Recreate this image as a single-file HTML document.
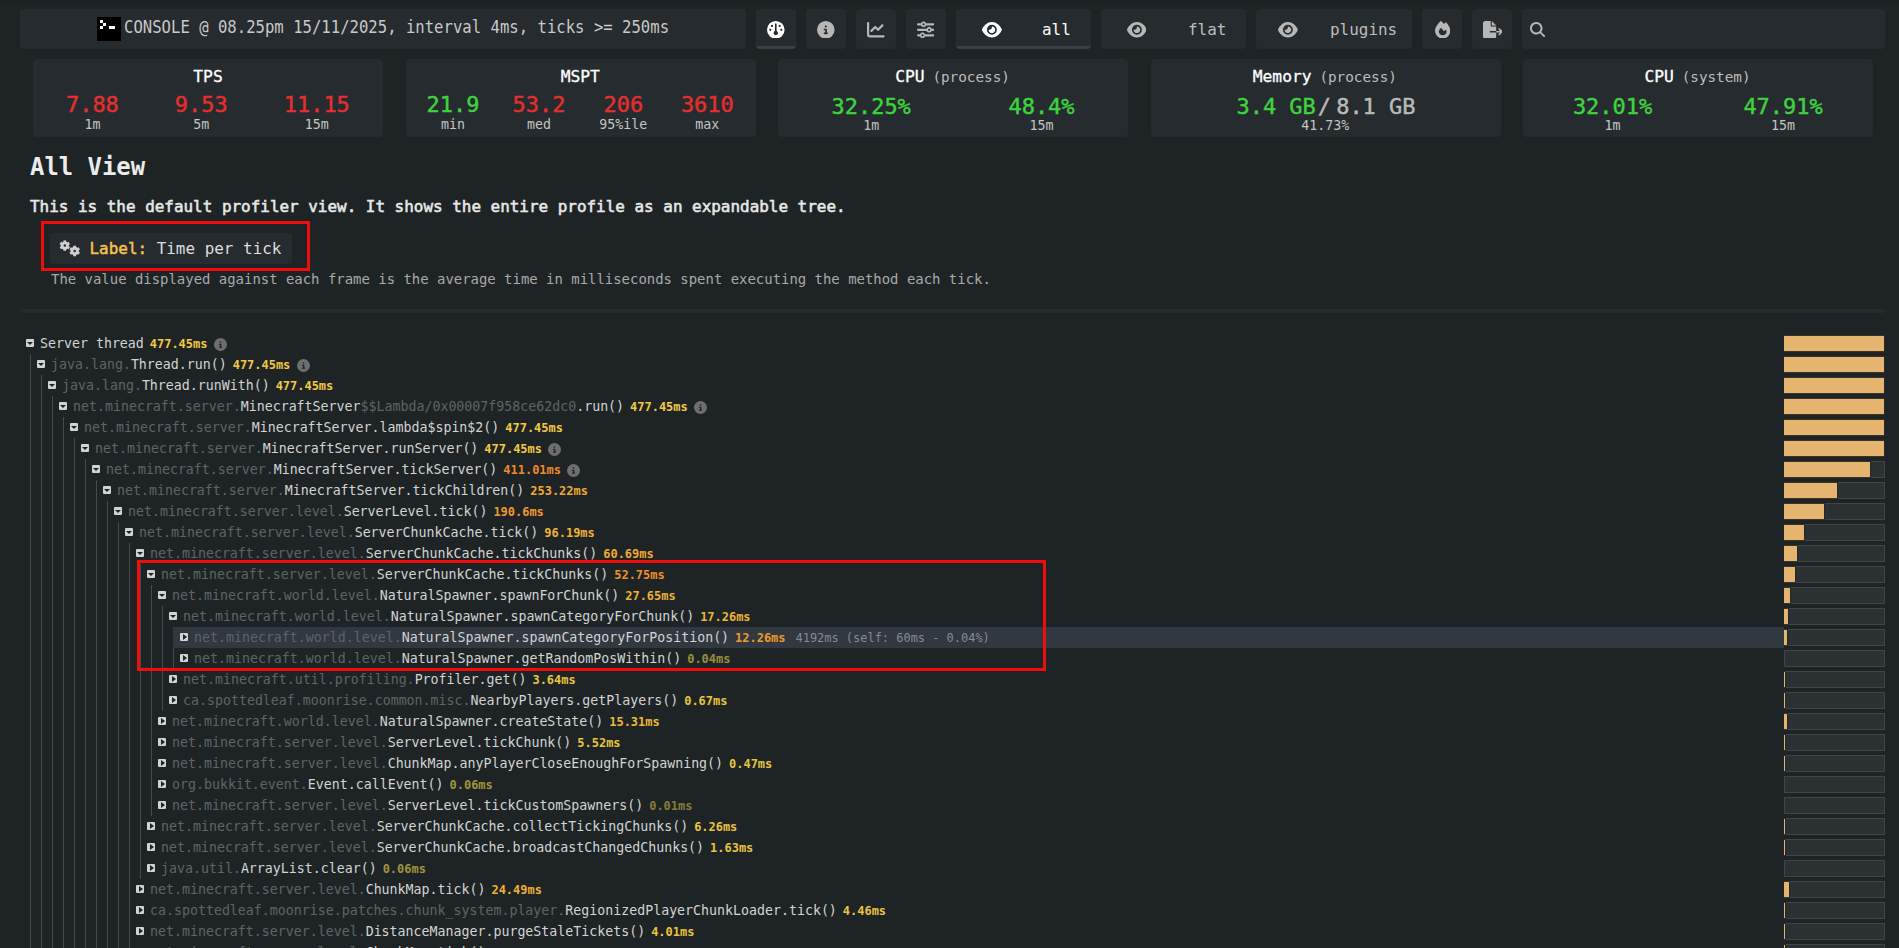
<!DOCTYPE html><html lang="en"><head><meta charset="utf-8"><title>spark | All View</title><style>
*{box-sizing:border-box;margin:0;padding:0}
html,body{width:1899px;height:948px;overflow:hidden;background:#1e2425;}
body{position:relative;font-family:"DejaVu Sans Mono","Liberation Mono",monospace;color:#d6d6d6;}
.abs{position:absolute;white-space:pre;}
.box{position:absolute;background:#252b2e;border-radius:4px;}
.c{transform:translateX(-50%);text-align:center}
.title{font-size:15.61px;line-height:24px;color:#c9c9c9;transform:scaleY(1.085);transform-origin:0 0}
.btn{position:absolute;top:9px;height:40px;background:#252b2e;border-radius:4px;}
.btn.on{border-bottom:3px solid #3a4043;}
.btn svg{position:absolute;}
.bt{position:absolute;font-size:15.95px;line-height:20px;top:11px;color:#bdbdbd}
.on .bt{color:#fff}
.pt{font-size:16.3px;line-height:20px;color:#fff;top:66.5px;-webkit-text-stroke:0.3px #fff}
.pt span{font-size:14.3px;color:#bdbdbd;-webkit-text-stroke:0;margin-left:-2px}
.v{font-size:21.93px;line-height:26px;-webkit-text-stroke:0.45px currentColor}
.l{font-size:13.29px;line-height:16px;color:#c4c4c4}
.r{color:#e62e2e} .g{color:#3fd23f} .gr{color:#b9b9b9}
h1{position:absolute;left:30px;top:152px;font-size:23.92px;line-height:30px;font-weight:bold;color:#ececec;white-space:pre}
.desc{left:30px;top:197px;font-size:15.95px;line-height:20px;color:#e8e8e8;-webkit-text-stroke:0.55px #e8e8e8}
.lbl{left:89.5px;top:238.8px;font-size:15.95px;line-height:20px;color:#dedede}
.lbl b{color:#f5c04e;font-weight:normal;-webkit-text-stroke:0.5px #f5c04e}
.sub{left:51px;top:271px;font-size:13.95px;line-height:16px;color:#a9a9a9}
.red{position:absolute;border:3.5px solid #f20d0d;}
.row{position:absolute;height:21px;left:0;width:1899px;}
.row.hl{}
.hlbg{position:absolute;background:#31383f;height:21px;}
.ic{position:absolute;top:6.4px;width:8.2px;height:8.1px;background:#d2d2d2;border-radius:1px}
.ic i{position:absolute;left:0;top:0;width:0;height:0;border-style:solid}
.ic.d i{left:1.1px;top:2.9px;border-width:3.2px 3px 0 3px;border-color:#1e2425 transparent transparent transparent}
.ic.e i{left:2.9px;top:1.1px;border-width:3px 0 3px 4.2px;border-color:transparent transparent transparent #1e2425}
.n{position:absolute;top:0.3px;font-size:13.288px;line-height:21px;white-space:pre;color:#d3d3d3}
.n .p{color:#5d6467}
.n .t{font-size:11.96px;font-weight:bold;margin-left:6px;}
.n .x{font-size:11.96px;color:#858b8e;margin-left:10px}
.n svg.inf{width:13px;height:13px;margin-left:6.5px;vertical-align:-2.5px}
.bar{position:absolute;left:1784px;width:101px;height:17px;top:2px;background:#2b3133;border:1px solid #3f4548}
.bar i{position:absolute;left:-1px;top:-1px;height:17px;background:#e5b56f;border-top:1px solid #3b3427;border-bottom:1px solid #3b3427;box-shadow:1px 0 0 #23282a}
.vl{position:absolute;width:1px;background:#444a4d}
</style></head><body>
<div class="abs" style="left:0;top:0;width:1899px;height:1px;background:#1b2021"></div>
<div class="box" style="left:20px;top:9px;width:726px;height:40px"></div>
<svg class="abs" style="left:97px;top:17px" width="24" height="24" viewBox="0 0 24 24"><rect width="24" height="24" fill="#000"/><rect x="3" y="3" width="3" height="3" fill="#fff"/><rect x="6" y="6" width="3" height="3" fill="#fff"/><rect x="3" y="9" width="3" height="3" fill="#fff"/><rect x="12" y="9" width="3" height="3" fill="#fff"/><rect x="15" y="9" width="3" height="3" fill="#fff"/></svg>
<div class="abs title" style="left:124px;top:15px">CONSOLE @ 08.25pm 15/11/2025, interval 4ms, ticks &gt;= 250ms</div>
<div class="btn on" style="left:756px;width:40px"><svg style="left:11px;top:11.7px" width="17.60" height="17.6" viewBox="0 0 512 512"><path fill="#fff" d="M0 256a256 256 0 1 1 512 0A256 256 0 1 1 0 256zm320 96c0-26.900-16.500-49.900-40-59.300V88c0-13.300-10.700-24-24-24s-24 10.700-24 24V292.700c-23.500 9.500-40 32.500-40 59.300c0 35.300 28.700 64 64 64s64-28.700 64-64zM144 176a32 32 0 1 0 0-64 32 32 0 1 0 0 64zm-16 80a32 32 0 1 0 -64 0 32 32 0 1 0 64 0zm288 32a32 32 0 1 0 0-64 32 32 0 1 0 0 64zM400 144a32 32 0 1 0 -64 0 32 32 0 1 0 64 0z"/></svg></div>
<div class="btn" style="left:806px;width:40px"><svg style="left:11px;top:11.7px" width="17.60" height="17.6" viewBox="0 0 512 512"><path fill="#b7b7b7" d="M256 512A256 256 0 1 0 256 0a256 256 0 1 0 0 512zM216 336h24V272H216c-13.300 0-24-10.700-24-24s10.700-24 24-24h48c13.300 0 24 10.700 24 24v88h8c13.300 0 24 10.700 24 24s-10.700 24-24 24H216c-13.300 0-24-10.700-24-24s10.700-24 24-24zm40-208a32 32 0 1 1 0 64 32 32 0 1 1 0-64z"/></svg></div>
<div class="btn" style="left:856px;width:40px"><svg style="left:11px;top:11.7px" width="17.60" height="17.6" viewBox="0 0 512 512"><path fill="#b7b7b7" d="M64 64c0-17.700-14.300-32-32-32S0 46.300 0 64V400c0 44.200 35.800 80 80 80H480c17.700 0 32-14.300 32-32s-14.300-32-32-32H80c-8.800 0-16-7.200-16-16V64zm406.600 86.600c12.500-12.500 12.500-32.800 0-45.300s-32.800-12.500-45.300 0L320 210.700l-57.400-57.400c-12.500-12.500-32.800-12.500-45.300 0l-112 112c-12.500 12.500-12.500 32.800 0 45.300s32.800 12.500 45.300 0L240 221.300l57.400 57.400c12.500 12.500 32.800 12.500 45.300 0l128-128z"/></svg></div>
<div class="btn" style="left:906px;width:40px"><svg style="left:10.8px;top:11.7px" width="17.60" height="17.6" viewBox="0 0 512 512"><path fill="#b7b7b7" d="M0 416c0 17.700 14.300 32 32 32l54.700 0c12.300 28.300 40.500 48 73.300 48s61-19.700 73.300-48L480 448c17.700 0 32-14.300 32-32s-14.300-32-32-32l-246.700 0c-12.300-28.300-40.500-48-73.300-48s-61 19.700-73.300 48L32 384c-17.700 0-32 14.300-32 32zm128 0a32 32 0 1 1 64 0 32 32 0 1 1 -64 0zM320 256a32 32 0 1 1 64 0 32 32 0 1 1 -64 0zm32-80c-32.800 0-61 19.700-73.300 48L32 224c-17.700 0-32 14.300-32 32s14.300 32 32 32l246.700 0c12.300 28.300 40.500 48 73.300 48s61-19.700 73.300-48l54.700 0c17.700 0 32-14.300 32-32s-14.300-32-32-32l-54.700 0c-12.300-28.300-40.500-48-73.300-48zM192 128a32 32 0 1 1 0-64 32 32 0 1 1 0 64zm73.300-64C253 35.700 224.800 16 192 16s-61 19.700-73.300 48L32 64C14.300 64 0 78.300 0 96s14.300 32 32 32l86.700 0c12.300 28.300 40.500 48 73.300 48s61-19.700 73.300-48L480 128c17.700 0 32-14.300 32-32s-14.300-32-32-32L265.300 64z"/></svg></div>
<div class="btn on" style="left:956px;width:135px"><svg style="left:25.8px;top:11.7px" width="19.80" height="17.6" viewBox="0 0 576 512"><path fill="#fff" d="M288 32c-80.800 0-145.500 36.800-192.600 80.600C48.600 156 17.300 208 2.500 243.700c-3.300 7.900-3.300 16.700 0 24.600C17.300 304 48.600 356 95.400 399.400C142.500 443.200 207.200 480 288 480s145.500-36.800 192.600-80.600c46.800-43.500 78.100-95.400 93-131.100c3.300-7.900 3.300-16.700 0-24.600c-14.900-35.700-46.200-87.700-93-131.100C433.500 68.800 368.800 32 288 32zM144 256a144 144 0 1 1 288 0 144 144 0 1 1 -288 0zm144-64c0 35.300-28.700 64-64 64c-7.100 0-13.900-1.200-20.300-3.300c-5.500-1.800-11.900 1.600-11.700 7.400c.3 6.900 1.300 13.800 3.200 20.700c13.700 51.200 66.400 81.600 117.600 67.900s81.600-66.400 67.900-117.600c-11.100-41.500-47.800-69.400-88.600-71.100c-5.800-.2-9.200 6.100-7.400 11.700c2.100 6.400 3.300 13.200 3.300 20.300z"/></svg><span class="bt" style="left:86px">all</span></div>
<div class="btn" style="left:1101px;width:145px"><svg style="left:25.7px;top:11.7px" width="19.80" height="17.6" viewBox="0 0 576 512"><path fill="#b7b7b7" d="M288 32c-80.800 0-145.500 36.800-192.600 80.600C48.600 156 17.300 208 2.500 243.700c-3.300 7.900-3.300 16.700 0 24.600C17.300 304 48.600 356 95.400 399.400C142.500 443.200 207.200 480 288 480s145.500-36.800 192.600-80.600c46.800-43.500 78.100-95.400 93-131.100c3.300-7.900 3.300-16.700 0-24.600c-14.900-35.700-46.200-87.700-93-131.100C433.500 68.800 368.800 32 288 32zM144 256a144 144 0 1 1 288 0 144 144 0 1 1 -288 0zm144-64c0 35.300-28.700 64-64 64c-7.100 0-13.900-1.200-20.300-3.300c-5.500-1.800-11.900 1.600-11.700 7.400c.3 6.900 1.300 13.800 3.200 20.700c13.700 51.200 66.400 81.600 117.600 67.900s81.600-66.400 67.900-117.600c-11.100-41.500-47.800-69.400-88.600-71.100c-5.800-.2-9.200 6.100-7.400 11.700c2.100 6.400 3.300 13.200 3.300 20.300z"/></svg><span class="bt" style="left:87px">flat</span></div>
<div class="btn" style="left:1256px;width:156px"><svg style="left:22px;top:11.7px" width="19.80" height="17.6" viewBox="0 0 576 512"><path fill="#b7b7b7" d="M288 32c-80.800 0-145.500 36.800-192.600 80.600C48.600 156 17.300 208 2.500 243.700c-3.300 7.900-3.300 16.700 0 24.600C17.300 304 48.600 356 95.400 399.400C142.500 443.200 207.200 480 288 480s145.500-36.800 192.600-80.600c46.800-43.500 78.100-95.400 93-131.100c3.300-7.900 3.300-16.700 0-24.600c-14.900-35.700-46.200-87.700-93-131.100C433.500 68.800 368.800 32 288 32zM144 256a144 144 0 1 1 288 0 144 144 0 1 1 -288 0zm144-64c0 35.300-28.700 64-64 64c-7.100 0-13.900-1.200-20.300-3.300c-5.500-1.800-11.900 1.600-11.700 7.400c.3 6.900 1.300 13.800 3.200 20.700c13.700 51.200 66.400 81.600 117.600 67.900s81.600-66.400 67.900-117.600c-11.100-41.500-47.800-69.400-88.600-71.100c-5.800-.2-9.200 6.100-7.400 11.700c2.100 6.400 3.300 13.200 3.300 20.300z"/></svg><span class="bt" style="left:74px">plugins</span></div>
<div class="btn" style="left:1422px;width:40px"><svg style="left:12.8px;top:11.7px" width="15.40" height="17.6" viewBox="0 0 448 512"><path fill="#b7b7b7" d="M159.300 5.400c7.800-7.300 19.900-7.200 27.700 .1c27.600 25.900 53.500 53.800 77.700 84c11-14.400 23.500-30.100 37-42.900c7.900-7.400 20.100-7.400 28 .1c34.600 33 63.900 76.600 84.500 118c20.300 40.800 33.800 82.500 33.800 111.900C448 404.200 348.200 512 224 512C98.400 512 0 404.100 0 276.500c0-38.400 17.800-85.300 45.400-131.700C73.300 97.700 112.700 48.600 159.300 5.400zM225.700 416c25.300 0 47.700-7 68.800-21c42.100-29.400 53.400-88.200 28.100-134.400c-4.500-9-16-9.600-22.500-2l-25.200 29.300c-6.600 7.600-18.500 7.400-24.700-.5c-16.500-21-46-58.500-62.800-79.800c-6.300-8-18.300-8.100-24.700-.1c-33.800 42.500-50.800 69.300-50.800 99.400C112 375.400 162.600 416 225.700 416z"/></svg></div>
<div class="btn" style="left:1472px;width:40px"><svg style="left:10.6px;top:11.7px" width="19.80" height="17.6" viewBox="0 0 576 512"><path fill="#b7b7b7" d="M0 64C0 28.700 28.700 0 64 0H224V128c0 17.700 14.300 32 32 32H384V288H216c-13.300 0-24 10.700-24 24s10.700 24 24 24H384V448c0 35.300-28.700 64-64 64H64c-35.300 0-64-28.700-64-64V64zM384 336V288H494.100l-39-39c-9.400-9.400-9.400-24.600 0-33.900s24.600-9.400 33.900 0l80 80c9.400 9.400 9.400 24.600 0 33.900l-80 80c-9.400 9.400-24.600 9.400-33.900 0s-9.400-24.600 0-33.900l39-39H384zm0-208H256V0L384 128z"/></svg></div>
<div class="btn" style="left:1522px;width:363px"><svg style="left:7.8px;top:12.8px" width="15.40" height="15.4" viewBox="0 0 512 512"><path fill="#b7b7b7" d="M416 208c0 45.900-14.900 88.300-40 122.700L502.600 457.400c12.500 12.500 12.500 32.800 0 45.300s-32.800 12.500-45.300 0L330.700 376c-34.400 25.200-76.800 40-122.700 40C93.100 416 0 322.900 0 208S93.100 0 208 0S416 93.100 416 208zM208 352a144 144 0 1 0 0-288 144 144 0 1 0 0 288z"/></svg></div>
<div class="box" style="left:33px;top:59px;width:350px;height:78px"></div>
<div class="box" style="left:405.5px;top:59px;width:350px;height:78px"></div>
<div class="box" style="left:778px;top:59px;width:350px;height:78px"></div>
<div class="box" style="left:1150.5px;top:59px;width:350px;height:78px"></div>
<div class="box" style="left:1523.3px;top:59px;width:350px;height:78px"></div>
<div class="abs c pt" style="left:208px">TPS</div>
<div class="abs c v r" style="left:92.4px;top:92.4px">7.88</div>
<div class="abs c l" style="left:92.4px;top:117px">1m</div>
<div class="abs c v r" style="left:201.2px;top:92.4px">9.53</div>
<div class="abs c l" style="left:201.2px;top:117px">5m</div>
<div class="abs c v r" style="left:316.8px;top:92.4px">11.15</div>
<div class="abs c l" style="left:316.8px;top:117px">15m</div>
<div class="abs c pt" style="left:580.3px">MSPT</div>
<div class="abs c v g" style="left:453px;top:92.4px">21.9</div>
<div class="abs c l" style="left:453px;top:117px">min</div>
<div class="abs c v r" style="left:539px;top:92.4px">53.2</div>
<div class="abs c l" style="left:539px;top:117px">med</div>
<div class="abs c v r" style="left:623.3px;top:92.4px">206</div>
<div class="abs c l" style="left:623.3px;top:117px">95%ile</div>
<div class="abs c v r" style="left:707.3px;top:92.4px">3610</div>
<div class="abs c l" style="left:707.3px;top:117px">max</div>
<div class="abs c pt" style="left:952.5px">CPU <span>(process)</span></div>
<div class="abs c v g" style="left:871.2px;top:93.7px">32.25%</div>
<div class="abs c l" style="left:871.2px;top:118.3px">1m</div>
<div class="abs c v g" style="left:1041.5px;top:93.7px">48.4%</div>
<div class="abs c l" style="left:1041.5px;top:118.3px">15m</div>
<div class="abs c pt" style="left:1324.8px">Memory <span>(process)</span></div>
<div class="abs v g" style="left:1236.5px;top:93.7px">3.4 GB</div>
<div class="abs v gr" style="left:1317.7px;top:93.7px">/</div>
<div class="abs v gr" style="left:1336.2px;top:93.7px">8.1 GB</div>
<div class="abs c l" style="left:1325.3px;top:118.3px">41.73%</div>
<div class="abs c pt" style="left:1697.5px">CPU <span>(system)</span></div>
<div class="abs c v g" style="left:1612.5px;top:93.7px">32.01%</div>
<div class="abs c l" style="left:1612.5px;top:118.3px">1m</div>
<div class="abs c v g" style="left:1783px;top:93.7px">47.91%</div>
<div class="abs c l" style="left:1783px;top:118.3px">15m</div>
<h1>All View</h1>
<div class="abs desc">This is the default profiler view. It shows the entire profile as an expandable tree.</div>
<div class="box" style="left:50px;top:233px;width:242px;height:31px"></div>
<svg class="abs" style="left:58px;top:238px" width="24" height="20" viewBox="0 0 24 20"><circle cx="6.8" cy="7.6" r="2.70" fill="none" stroke="#d0d0d0" stroke-width="2.91"/><path d="M9.50 9.16L11.30 10.20" stroke="#d0d0d0" stroke-width="2.70"/><path d="M6.80 10.72L6.80 12.80" stroke="#d0d0d0" stroke-width="2.70"/><path d="M4.10 9.16L2.30 10.20" stroke="#d0d0d0" stroke-width="2.70"/><path d="M4.10 6.04L2.30 5.00" stroke="#d0d0d0" stroke-width="2.70"/><path d="M6.80 4.48L6.80 2.40" stroke="#d0d0d0" stroke-width="2.70"/><path d="M9.50 6.04L11.30 5.00" stroke="#d0d0d0" stroke-width="2.70"/><circle cx="16.7" cy="13.0" r="2.76" fill="none" stroke="#d0d0d0" stroke-width="2.97"/><path d="M19.45 14.59L21.29 15.65" stroke="#d0d0d0" stroke-width="2.76"/><path d="M16.70 16.18L16.70 18.30" stroke="#d0d0d0" stroke-width="2.76"/><path d="M13.95 14.59L12.11 15.65" stroke="#d0d0d0" stroke-width="2.76"/><path d="M13.95 11.41L12.11 10.35" stroke="#d0d0d0" stroke-width="2.76"/><path d="M16.70 9.82L16.70 7.70" stroke="#d0d0d0" stroke-width="2.76"/><path d="M19.45 11.41L21.29 10.35" stroke="#d0d0d0" stroke-width="2.76"/></svg>
<div class="abs lbl"><b>Label:</b> Time per tick</div>
<div class="red" style="left:40.8px;top:220.6px;width:269.6px;height:50.8px"></div>
<div class="abs sub">The value displayed against each frame is the average time in milliseconds spent executing the method each tick.</div>
<div class="abs" style="left:20px;top:308.8px;width:1864.5px;height:4px;background:#252b2d;border-radius:2px"></div>
<div class="vl" style="left:30px;top:354px;height:609px"></div>
<div class="vl" style="left:41px;top:375px;height:588px"></div>
<div class="vl" style="left:52px;top:396px;height:567px"></div>
<div class="vl" style="left:63px;top:417px;height:546px"></div>
<div class="vl" style="left:74px;top:438px;height:525px"></div>
<div class="vl" style="left:85px;top:459px;height:504px"></div>
<div class="vl" style="left:96px;top:480px;height:483px"></div>
<div class="vl" style="left:107px;top:501px;height:462px"></div>
<div class="vl" style="left:118px;top:522px;height:441px"></div>
<div class="vl" style="left:129px;top:543px;height:420px"></div>
<div class="vl" style="left:140px;top:564px;height:315px"></div>
<div class="vl" style="left:151px;top:585px;height:231px"></div>
<div class="vl" style="left:162px;top:606px;height:105px"></div>
<div class="vl" style="left:173px;top:627px;height:42px"></div>
<div class="row" style="top:333px"><div class="ic d" style="left:26px"><i></i></div><div class="n" style="left:40px">Server thread<span class="t" style="color:#f3c943">477.45ms</span><svg class="inf" viewBox="0 0 512 512"><path fill="#6e6e6e" d="M256 512A256 256 0 1 0 256 0a256 256 0 1 0 0 512zM216 336h24V272H216c-13.300 0-24-10.700-24-24s10.700-24 24-24h48c13.300 0 24 10.700 24 24v88h8c13.300 0 24 10.700 24 24s-10.700 24-24 24H216c-13.300 0-24-10.700-24-24s10.700-24 24-24zm40-208a32 32 0 1 1 0 64 32 32 0 1 1 0-64z"/></svg></div><div class="bar"><i style="width:100px"></i></div></div>
<div class="row" style="top:354px"><div class="ic d" style="left:37px"><i></i></div><div class="n" style="left:51px"><span class="p">java.lang.</span>Thread.run()<span class="t" style="color:#f3c943">477.45ms</span><svg class="inf" viewBox="0 0 512 512"><path fill="#6e6e6e" d="M256 512A256 256 0 1 0 256 0a256 256 0 1 0 0 512zM216 336h24V272H216c-13.300 0-24-10.700-24-24s10.700-24 24-24h48c13.300 0 24 10.700 24 24v88h8c13.300 0 24 10.700 24 24s-10.700 24-24 24H216c-13.300 0-24-10.700-24-24s10.700-24 24-24zm40-208a32 32 0 1 1 0 64 32 32 0 1 1 0-64z"/></svg></div><div class="bar"><i style="width:100px"></i></div></div>
<div class="row" style="top:375px"><div class="ic d" style="left:48px"><i></i></div><div class="n" style="left:62px"><span class="p">java.lang.</span>Thread.runWith()<span class="t" style="color:#f3c943">477.45ms</span></div><div class="bar"><i style="width:100px"></i></div></div>
<div class="row" style="top:396px"><div class="ic d" style="left:59px"><i></i></div><div class="n" style="left:73px"><span class="p">net.minecraft.server.</span>MinecraftServer<span class="p">$$Lambda/0x00007f958ce62dc0</span>.run()<span class="t" style="color:#f3c943">477.45ms</span><svg class="inf" viewBox="0 0 512 512"><path fill="#6e6e6e" d="M256 512A256 256 0 1 0 256 0a256 256 0 1 0 0 512zM216 336h24V272H216c-13.300 0-24-10.700-24-24s10.700-24 24-24h48c13.300 0 24 10.700 24 24v88h8c13.300 0 24 10.700 24 24s-10.700 24-24 24H216c-13.300 0-24-10.700-24-24s10.700-24 24-24zm40-208a32 32 0 1 1 0 64 32 32 0 1 1 0-64z"/></svg></div><div class="bar"><i style="width:100px"></i></div></div>
<div class="row" style="top:417px"><div class="ic d" style="left:70px"><i></i></div><div class="n" style="left:84px"><span class="p">net.minecraft.server.</span>MinecraftServer.lambda$spin$2()<span class="t" style="color:#f3c943">477.45ms</span></div><div class="bar"><i style="width:100px"></i></div></div>
<div class="row" style="top:438px"><div class="ic d" style="left:81px"><i></i></div><div class="n" style="left:95px"><span class="p">net.minecraft.server.</span>MinecraftServer.runServer()<span class="t" style="color:#f3c943">477.45ms</span><svg class="inf" viewBox="0 0 512 512"><path fill="#6e6e6e" d="M256 512A256 256 0 1 0 256 0a256 256 0 1 0 0 512zM216 336h24V272H216c-13.300 0-24-10.700-24-24s10.700-24 24-24h48c13.300 0 24 10.700 24 24v88h8c13.300 0 24 10.700 24 24s-10.700 24-24 24H216c-13.300 0-24-10.700-24-24s10.700-24 24-24zm40-208a32 32 0 1 1 0 64 32 32 0 1 1 0-64z"/></svg></div><div class="bar"><i style="width:100px"></i></div></div>
<div class="row" style="top:459px"><div class="ic d" style="left:92px"><i></i></div><div class="n" style="left:106px"><span class="p">net.minecraft.server.</span>MinecraftServer.tickServer()<span class="t" style="color:#ef8a2b">411.01ms</span><svg class="inf" viewBox="0 0 512 512"><path fill="#6e6e6e" d="M256 512A256 256 0 1 0 256 0a256 256 0 1 0 0 512zM216 336h24V272H216c-13.300 0-24-10.700-24-24s10.700-24 24-24h48c13.300 0 24 10.700 24 24v88h8c13.300 0 24 10.700 24 24s-10.700 24-24 24H216c-13.300 0-24-10.700-24-24s10.700-24 24-24zm40-208a32 32 0 1 1 0 64 32 32 0 1 1 0-64z"/></svg></div><div class="bar"><i style="width:86px"></i></div></div>
<div class="row" style="top:480px"><div class="ic d" style="left:103px"><i></i></div><div class="n" style="left:117px"><span class="p">net.minecraft.server.</span>MinecraftServer.tickChildren()<span class="t" style="color:#f0a935">253.22ms</span></div><div class="bar"><i style="width:53px"></i></div></div>
<div class="row" style="top:501px"><div class="ic d" style="left:114px"><i></i></div><div class="n" style="left:128px"><span class="p">net.minecraft.server.level.</span>ServerLevel.tick()<span class="t" style="color:#f09a2e">190.6ms</span></div><div class="bar"><i style="width:40px"></i></div></div>
<div class="row" style="top:522px"><div class="ic d" style="left:125px"><i></i></div><div class="n" style="left:139px"><span class="p">net.minecraft.server.level.</span>ServerChunkCache.tick()<span class="t" style="color:#f0b435">96.19ms</span></div><div class="bar"><i style="width:20px"></i></div></div>
<div class="row" style="top:543px"><div class="ic d" style="left:136px"><i></i></div><div class="n" style="left:150px"><span class="p">net.minecraft.server.level.</span>ServerChunkCache.tickChunks()<span class="t" style="color:#f0ab33">60.69ms</span></div><div class="bar"><i style="width:13px"></i></div></div>
<div class="row" style="top:564px"><div class="ic d" style="left:147px"><i></i></div><div class="n" style="left:161px"><span class="p">net.minecraft.server.level.</span>ServerChunkCache.tickChunks()<span class="t" style="color:#ee8f2c">52.75ms</span></div><div class="bar"><i style="width:11px"></i></div></div>
<div class="row" style="top:585px"><div class="ic d" style="left:158px"><i></i></div><div class="n" style="left:172px"><span class="p">net.minecraft.world.level.</span>NaturalSpawner.spawnForChunk()<span class="t" style="color:#efb136">27.65ms</span></div><div class="bar"><i style="width:6px"></i></div></div>
<div class="row" style="top:606px"><div class="ic d" style="left:169px"><i></i></div><div class="n" style="left:183px"><span class="p">net.minecraft.world.level.</span>NaturalSpawner.spawnCategoryForChunk()<span class="t" style="color:#efb437">17.26ms</span></div><div class="bar"><i style="width:4px"></i></div></div>
<div class="row" style="top:627px"><div class="hlbg" style="left:173px;width:1611px"></div><div class="ic e" style="left:180px"><i></i></div><div class="n" style="left:194px"><span class="p">net.minecraft.world.level.</span>NaturalSpawner.spawnCategoryForPosition()<span class="t" style="color:#ee9a2e">12.26ms</span><span class="x">4192ms (self: 60ms - 0.04%)</span></div><div class="bar"><i style="width:3px"></i></div></div>
<div class="row" style="top:648px"><div class="ic e" style="left:180px"><i></i></div><div class="n" style="left:194px"><span class="p">net.minecraft.world.level.</span>NaturalSpawner.getRandomPosWithin()<span class="t" style="color:#9a8e3c">0.04ms</span></div><div class="bar"></div></div>
<div class="row" style="top:669px"><div class="ic e" style="left:169px"><i></i></div><div class="n" style="left:183px"><span class="p">net.minecraft.util.profiling.</span>Profiler.get()<span class="t" style="color:#e9c540">3.64ms</span></div><div class="bar"><i style="width:1px"></i></div></div>
<div class="row" style="top:690px"><div class="ic e" style="left:169px"><i></i></div><div class="n" style="left:183px"><span class="p">ca.spottedleaf.moonrise.common.misc.</span>NearbyPlayers.getPlayers()<span class="t" style="color:#e9c540">0.67ms</span></div><div class="bar"><i style="width:1px"></i></div></div>
<div class="row" style="top:711px"><div class="ic e" style="left:158px"><i></i></div><div class="n" style="left:172px"><span class="p">net.minecraft.world.level.</span>NaturalSpawner.createState()<span class="t" style="color:#eeb838">15.31ms</span></div><div class="bar"><i style="width:3px"></i></div></div>
<div class="row" style="top:732px"><div class="ic e" style="left:158px"><i></i></div><div class="n" style="left:172px"><span class="p">net.minecraft.server.level.</span>ServerLevel.tickChunk()<span class="t" style="color:#ecc33e">5.52ms</span></div><div class="bar"><i style="width:1px"></i></div></div>
<div class="row" style="top:753px"><div class="ic e" style="left:158px"><i></i></div><div class="n" style="left:172px"><span class="p">net.minecraft.server.level.</span>ChunkMap.anyPlayerCloseEnoughForSpawning()<span class="t" style="color:#e4c441">0.47ms</span></div><div class="bar"><i style="width:1px"></i></div></div>
<div class="row" style="top:774px"><div class="ic e" style="left:158px"><i></i></div><div class="n" style="left:172px"><span class="p">org.bukkit.event.</span>Event.callEvent()<span class="t" style="color:#a2953d">0.06ms</span></div><div class="bar"></div></div>
<div class="row" style="top:795px"><div class="ic e" style="left:158px"><i></i></div><div class="n" style="left:172px"><span class="p">net.minecraft.server.level.</span>ServerLevel.tickCustomSpawners()<span class="t" style="color:#877d38">0.01ms</span></div><div class="bar"></div></div>
<div class="row" style="top:816px"><div class="ic e" style="left:147px"><i></i></div><div class="n" style="left:161px"><span class="p">net.minecraft.server.level.</span>ServerChunkCache.collectTickingChunks()<span class="t" style="color:#ecc33e">6.26ms</span></div><div class="bar"><i style="width:1px"></i></div></div>
<div class="row" style="top:837px"><div class="ic e" style="left:147px"><i></i></div><div class="n" style="left:161px"><span class="p">net.minecraft.server.level.</span>ServerChunkCache.broadcastChangedChunks()<span class="t" style="color:#ecc33e">1.63ms</span></div><div class="bar"><i style="width:1px"></i></div></div>
<div class="row" style="top:858px"><div class="ic e" style="left:147px"><i></i></div><div class="n" style="left:161px"><span class="p">java.util.</span>ArrayList.clear()<span class="t" style="color:#a2953d">0.06ms</span></div><div class="bar"></div></div>
<div class="row" style="top:879px"><div class="ic e" style="left:136px"><i></i></div><div class="n" style="left:150px"><span class="p">net.minecraft.server.level.</span>ChunkMap.tick()<span class="t" style="color:#efb136">24.49ms</span></div><div class="bar"><i style="width:5px"></i></div></div>
<div class="row" style="top:900px"><div class="ic e" style="left:136px"><i></i></div><div class="n" style="left:150px"><span class="p">ca.spottedleaf.moonrise.patches.chunk_system.player.</span>RegionizedPlayerChunkLoader.tick()<span class="t" style="color:#ecc33e">4.46ms</span></div><div class="bar"><i style="width:1px"></i></div></div>
<div class="row" style="top:921px"><div class="ic e" style="left:136px"><i></i></div><div class="n" style="left:150px"><span class="p">net.minecraft.server.level.</span>DistanceManager.purgeStaleTickets()<span class="t" style="color:#ecc33e">4.01ms</span></div><div class="bar"><i style="width:1px"></i></div></div>
<div class="row" style="top:942px"><div class="ic e" style="left:136px"><i></i></div><div class="n" style="left:150px"><span class="p">net.minecraft.server.level.</span>ChunkMap.tick()<span class="t" style="color:#ecc33e">2.31ms</span></div><div class="bar"><i style="width:1px"></i></div></div>
<div class="red" style="left:136.8px;top:560.3px;width:909.6px;height:111.2px"></div>
</body></html>
